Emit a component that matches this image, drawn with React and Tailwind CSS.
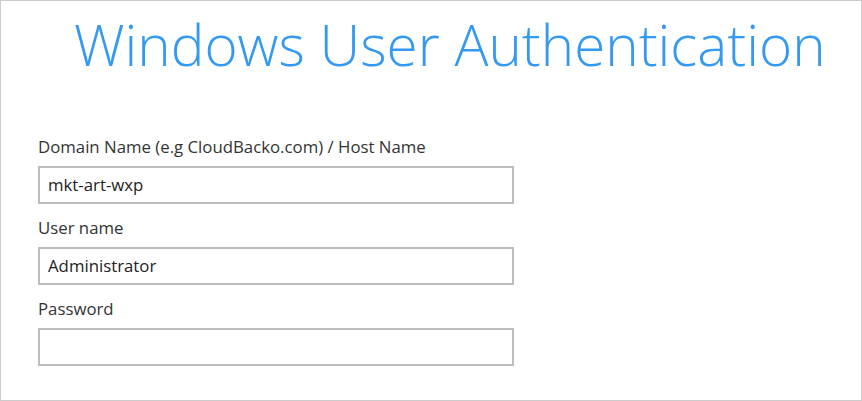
import React from "react";

const Field = ({ label, value }) => (
  <div className="flex flex-col">
    <label className="text-[16.8px] leading-[20px] text-[#333333]">{label}</label>
    <div className="mt-[9px] h-[38px] w-[476px] border-2 border-[#bdbdbd] bg-white px-[8px] flex items-center text-[16.8px] text-[#222222]">
      {value}
    </div>
  </div>
);

const App = () => {
  return (
    <div
      className="w-[862px] h-[401px] bg-white border border-[#cccccc] overflow-hidden"
      style={{ fontFamily: '"Open Sans", "Noto Sans", sans-serif' }}
    >
      <h1 className="ml-[73px] mt-[8px] text-[56.6px] leading-[72px] font-light text-[#3399f3] whitespace-nowrap">
        Windows User Authentication
      </h1>
      <div className="ml-[37px] mt-[56px] flex flex-col gap-[14px]">
        <Field label="Domain Name (e.g CloudBacko.com) / Host Name" value="mkt-art-wxp" />
        <Field label="User name" value="Administrator" />
        <Field label="Password" value="" />
      </div>
    </div>
  );
};

export default App;
